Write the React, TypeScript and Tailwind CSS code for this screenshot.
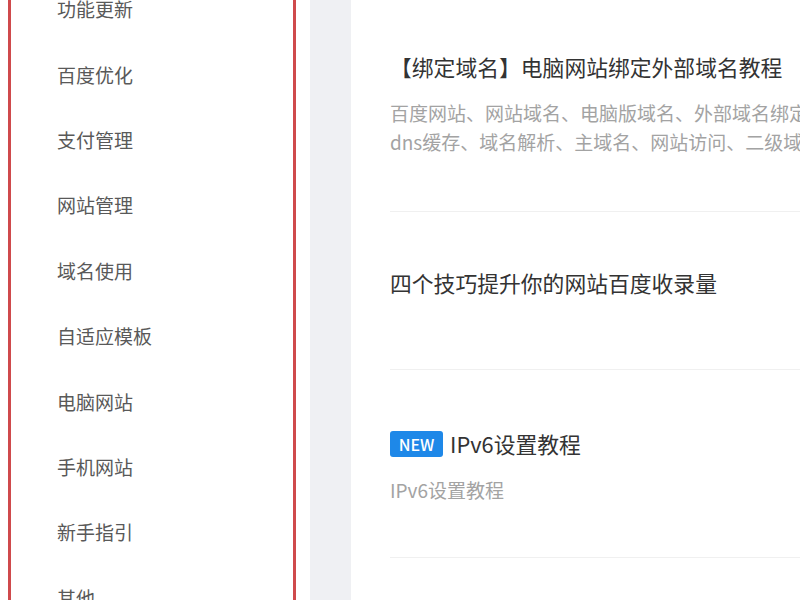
import React from "react";

const menu = [
  "功能更新",
  "百度优化",
  "支付管理",
  "网站管理",
  "域名使用",
  "自适应模板",
  "电脑网站",
  "手机网站",
  "新手指引",
  "其他",
];

export default function App() {
  return (
    <div
      className="flex h-[600px] w-[800px] overflow-hidden bg-white"
      style={{ fontFamily: '"Noto Sans CJK SC", "Noto Sans", sans-serif' }}
    >
      {/* Sidebar */}
      <div className="h-full w-[310px] shrink-0 bg-white pl-[8px] pr-[14px]">
        <div className="h-[660px] -mt-[24px] border-x-[3px] border-[#cf4a4c]">
          <ul className="flex flex-col pl-[46px]">
            {menu.map((m) => (
              <li
                key={m}
                className="flex h-[65.4px] items-center text-[19px] leading-none text-[#595959]"
              >
                {m}
              </li>
            ))}
          </ul>
        </div>
      </div>

      {/* Gray gap */}
      <div className="h-full w-[41px] shrink-0 bg-[#eff0f3]" />

      {/* Content */}
      <div className="h-full flex-1 overflow-hidden bg-white pl-[39px]">
        <div className="w-[600px]">
          {/* Item 1 */}
          <div className="border-b border-[#f0f0f0] pt-[52px] pb-[55px]">
            <h3 className="h-[30px] whitespace-nowrap text-[21.8px] leading-[30px] text-[#333]">
              【绑定域名】电脑网站绑定外部域名教程
            </h3>
            <p className="mt-[16px] w-[440px] text-[19px] leading-[29px] text-[#a3a3a3]">
              百度网站、网站域名、电脑版域名、外部域名绑定、dns缓存、域名解析、主域名、网站访问、二级域名
            </p>
          </div>

          {/* Item 2 */}
          <div className="h-[158px] border-b border-[#f0f0f0] pt-[56px]">
            <h3 className="h-[30px] whitespace-nowrap text-[21.8px] leading-[30px] text-[#333]">
              四个技巧提升你的网站百度收录量
            </h3>
          </div>

          {/* Item 3 */}
          <div className="h-[188px] border-b border-[#f0f0f0] pt-[59px]">
            <h3 className="flex h-[30px] items-center whitespace-nowrap text-[21.8px] leading-[30px] text-[#333]">
              <span className="mr-[7px] flex h-[26px] w-[53px] items-center justify-center rounded-[3px] bg-[#1e88e8] text-[16px] font-medium leading-none text-white">
                NEW
              </span>
              IPv6设置教程
            </h3>
            <p className="mt-[16px] text-[19px] leading-[29px] text-[#a3a3a3]">
              IPv6设置教程
            </p>
          </div>
        </div>
      </div>
    </div>
  );
}
